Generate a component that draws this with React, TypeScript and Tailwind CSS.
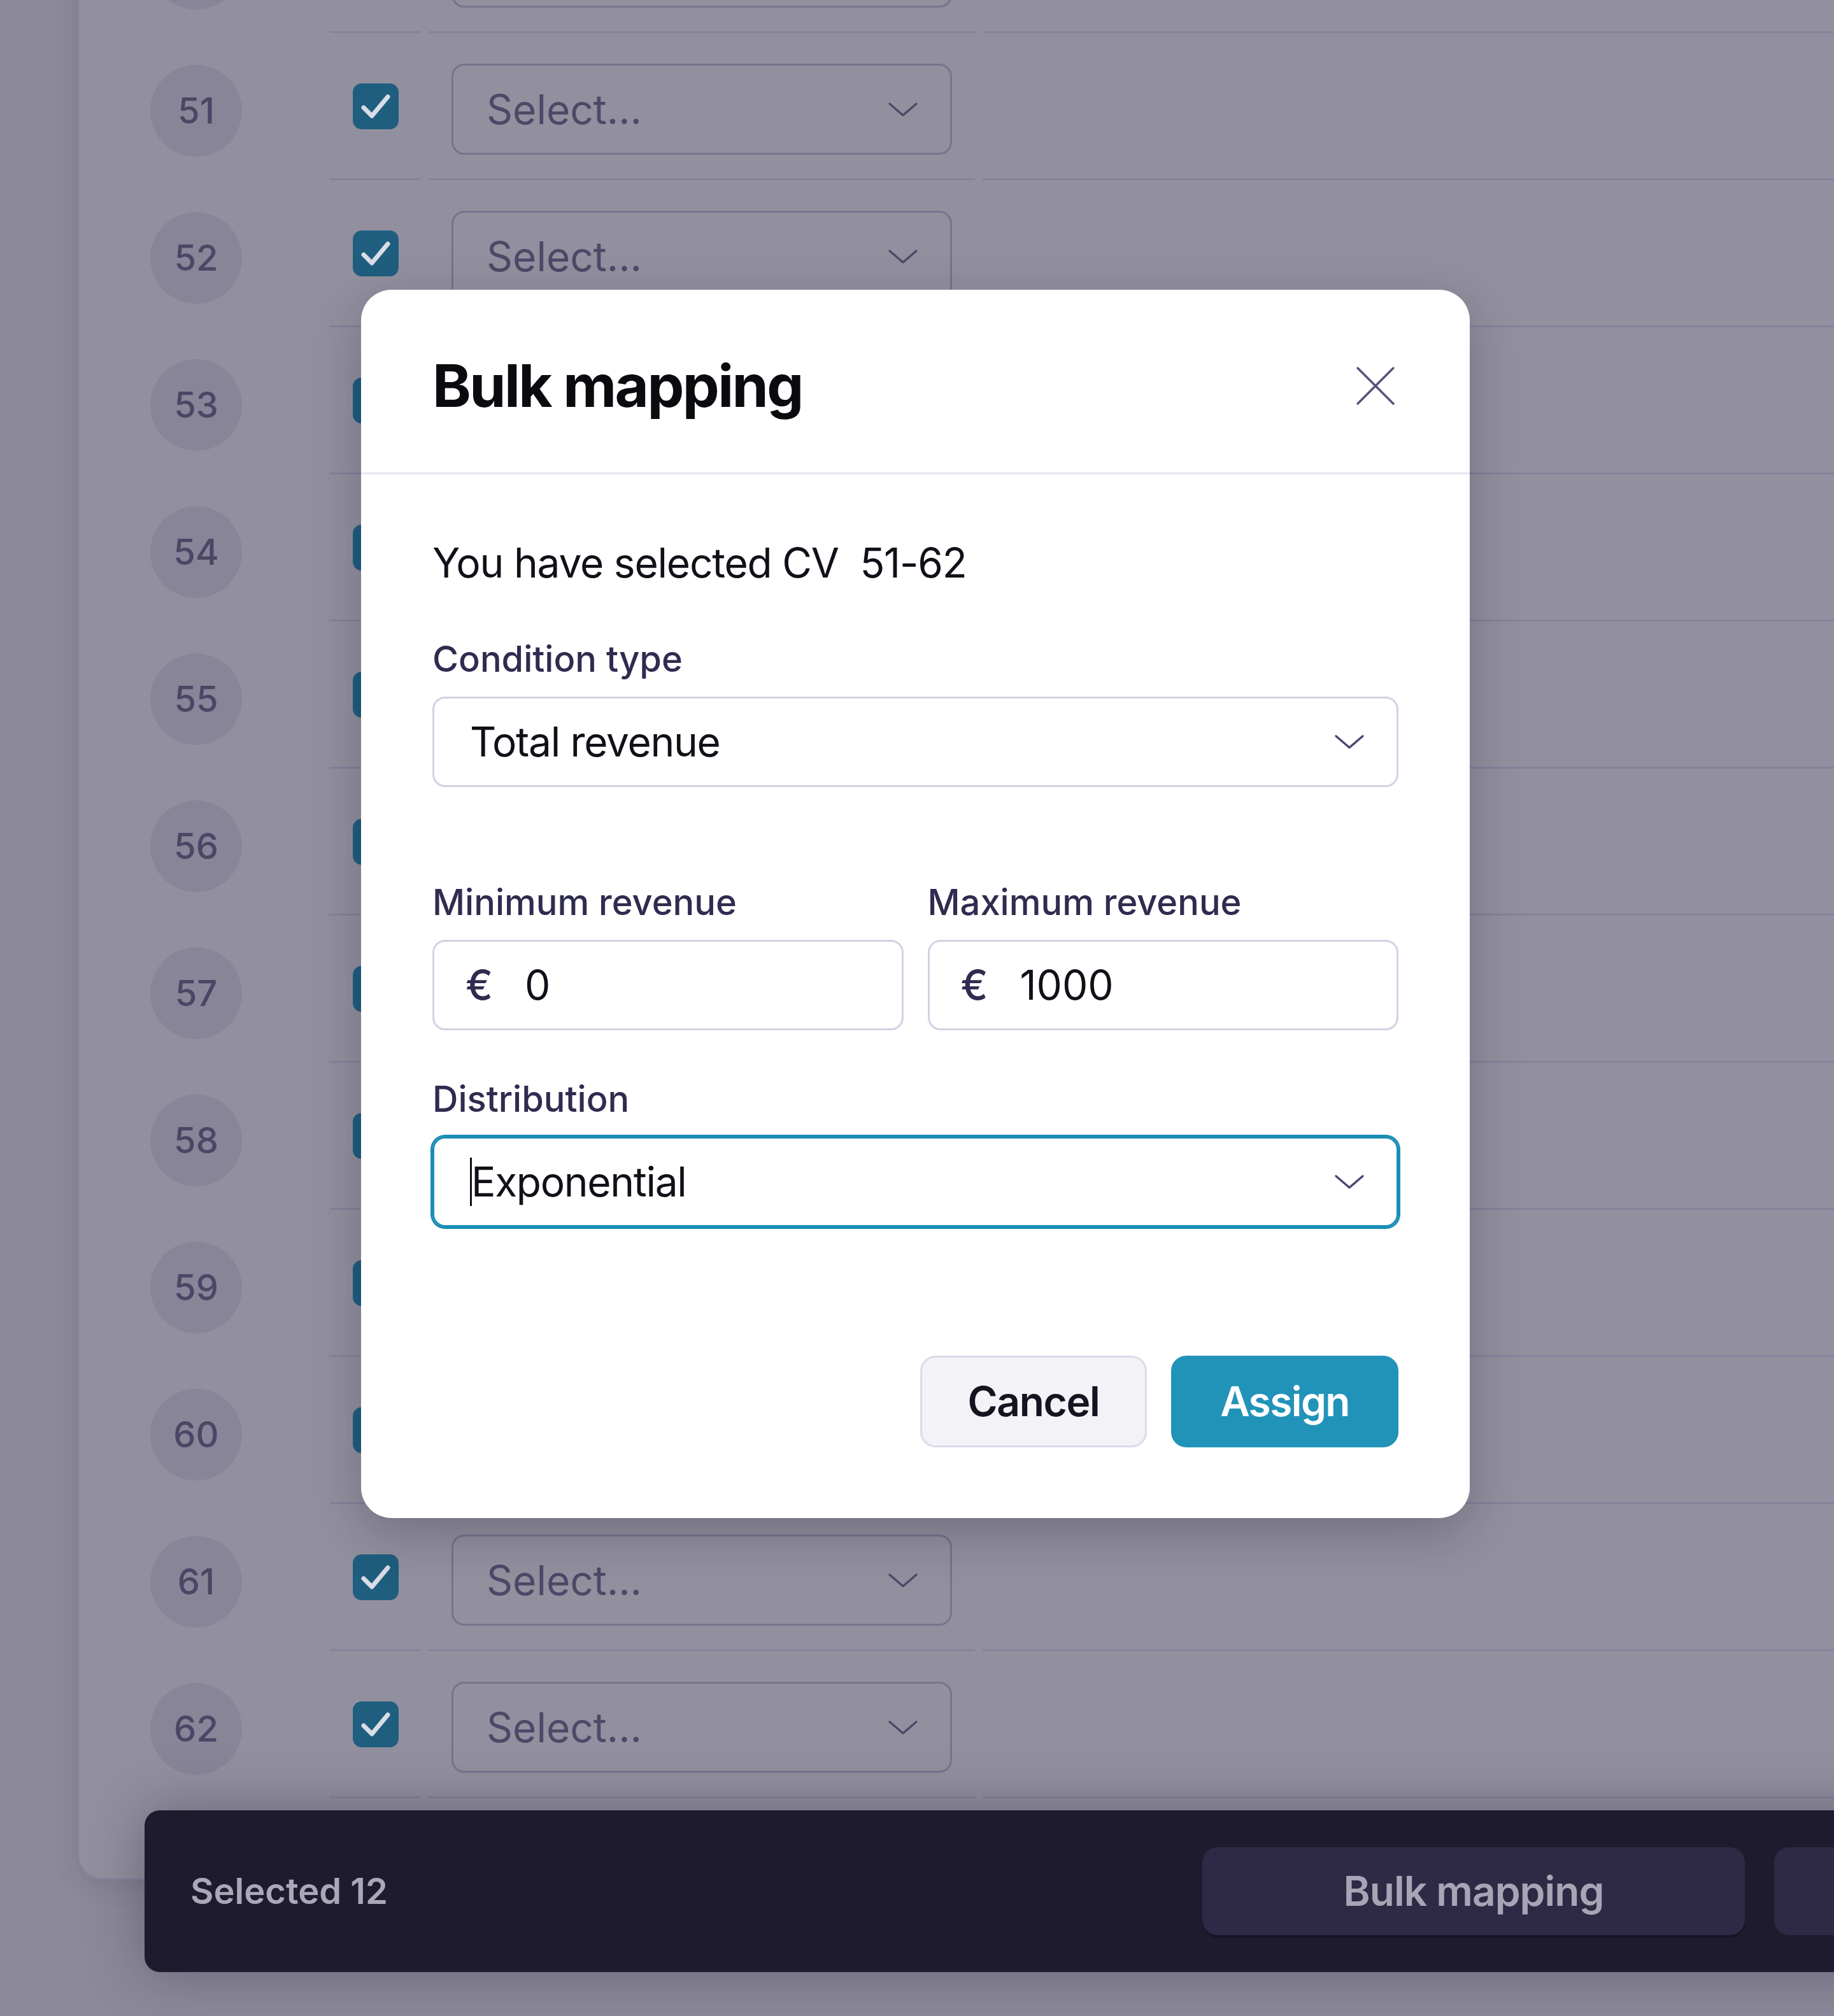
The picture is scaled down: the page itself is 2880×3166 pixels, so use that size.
import { Fragment } from 'react'

const rowIds = [50, 51, 52, 53, 54, 55, 56, 57, 58, 59, 60, 61, 62]

const Chevron = ({ color }: { color: string }) => (
    <svg width="48" height="24" viewBox="0 0 48 24" fill="none" className="shrink-0">
        <polyline points="3,3 24,21 45,3" stroke={color} strokeWidth="3.5" strokeLinecap="round" strokeLinejoin="round" />
    </svg>
)

const TableRow = ({ id }: { id: number }) => {
    return (
        <div className="flex h-[231px]">
            <div className="w-[394px] shrink-0 flex items-center pl-[112px] pt-[12px]">
                <div className="w-[144px] h-[144px] rounded-full bg-[#878597] flex items-center justify-center text-[56px] leading-[80px] font-medium text-[#4a4766]">
                    {id}
                </div>
            </div>
            <div className="w-[143px] shrink-0 border-b-[3px] border-[#85829a] flex items-center justify-center pt-[2px]">
                <div className="w-[72px] h-[72px] rounded-[14px] bg-[#1f5e7f] flex items-center justify-center">
                    <svg width="72" height="72" viewBox="0 0 72 72" fill="none">
                        <polyline points="17,38 30,51 55,21" stroke="#d9dde6" strokeWidth="7" strokeLinecap="round" strokeLinejoin="round" />
                    </svg>
                </div>
            </div>
            <div className="w-[12px] shrink-0" />
            <div className="w-[858px] shrink-0 border-b-[3px] border-[#85829a] flex items-center justify-center pt-[11px]">
                <div className="w-[786px] h-[143px] rounded-[20px] border-[3px] border-[#77748c] flex items-center justify-between pl-[52px] pr-[50px]">
                    <span className="text-[64px] leading-[96px] text-[#4c4968]">Select...</span>
                    <Chevron color="#4c4968" />
                </div>
            </div>
            <div className="w-[12px] shrink-0" />
            <div className="flex-1 border-b-[3px] border-[#85829a]" />
        </div>
    )
}

const Field = ({ label, children }: { label: string, children: React.ReactNode }) => (
    <div className="flex flex-col">
        <span className="text-[56px] leading-[80px] font-medium text-[#2f2c50]">{label}</span>
        <div className="mt-[19px]">{children}</div>
    </div>
)

const App = () => {
    return (
        <div className="relative h-[3166px] w-full overflow-hidden bg-[#8c8a99] font-['Inter',sans-serif]">
            {/* table card behind the overlay */}
            <div className="ml-[121px] w-[3200px] -mt-[182px] pb-[126px] rounded-[40px] border-[3px] border-[#85829a] bg-[#92909e] shadow-[0_10px_40px_rgba(30,27,50,0.12)]">
                {rowIds.map((id) => (
                    <TableRow key={id} id={id} />
                ))}
            </div>

            {/* sticky selection bar */}
            <div className="absolute left-[227px] top-[2843px] h-[254px] w-[2900px] rounded-[24px] bg-[#1e1b2e] flex items-center pl-[72px] shadow-[0_0_90px_rgba(30,27,50,0.35)]">
                <div className="w-[1589px] shrink-0 text-[56px] leading-[80px] font-semibold text-[#a9a7b8]">Selected 12</div>
                <div className="flex gap-[46px]">
                    <div className="w-[852px] h-[138px] rounded-[24px] bg-[#2e2a45] flex items-center justify-center text-[64px] leading-[96px] font-semibold tracking-[-1px] text-[#a7a5b5] shadow-[0_4px_0_rgba(10,8,20,0.35)]">
                        Bulk mapping
                    </div>
                    <div className="w-[852px] h-[138px] rounded-[24px] bg-[#2e2a45]" />
                </div>
            </div>

            {/* modal */}
            <div className="absolute left-[567px] top-[455px] w-[1741px] rounded-[48px] bg-white shadow-[0_24px_80px_rgba(20,16,40,0.25)]">
                <div className="flex items-center justify-between px-[112px] pt-[87px] pb-[72px] border-b-[3px] border-[#e7e5ef]">
                    <span className="text-[92px] leading-[128px] font-bold tracking-[-2.6px] text-[#0a0a0f]">Bulk mapping</span>
                    <button className="w-[72px] h-[72px] flex items-center justify-center">
                        <svg width="72" height="72" viewBox="0 0 72 72" fill="none">
                            <line x1="8" y1="8" x2="64" y2="64" stroke="#55537a" strokeWidth="3.5" strokeLinecap="round" />
                            <line x1="64" y1="8" x2="8" y2="64" stroke="#55537a" strokeWidth="3.5" strokeLinecap="round" />
                        </svg>
                    </button>
                </div>

                <div className="px-[112px] pt-[91px] pb-[111px] flex flex-col">
                    <p className="text-[64px] leading-[96px] tracking-[-1.2px] text-[#111018] whitespace-pre">You have selected CV  51-62</p>

                    <div className="mt-[63px]">
                        <Field label="Condition type">
                            <div className="h-[142px] rounded-[20px] border-[3px] border-[#d4d1e3] flex items-center justify-between pl-[56px] pr-[50px]">
                                <span className="text-[64px] leading-[96px] tracking-[-1.3px] text-[#111018]">Total revenue</span>
                                <Chevron color="#4a4770" />
                            </div>
                        </Field>
                    </div>

                    <div className="mt-[141px] grid grid-cols-2 gap-[38px]">
                        <Field label="Minimum revenue">
                            <div className="h-[142px] rounded-[20px] border-[3px] border-[#d4d1e3] flex items-center pl-[49px]">
                                <span className="w-[93px] text-[64px] leading-[96px] font-medium text-[#2f2c50]">€</span>
                                <span className="text-[64px] leading-[96px] text-[#111018]">0</span>
                            </div>
                        </Field>
                        <Field label="Maximum revenue">
                            <div className="h-[142px] rounded-[20px] border-[3px] border-[#d4d1e3] flex items-center pl-[49px]">
                                <span className="w-[93px] text-[64px] leading-[96px] font-medium text-[#2f2c50]">€</span>
                                <span className="text-[64px] leading-[96px] text-[#111018]">1000</span>
                            </div>
                        </Field>
                    </div>

                    <div className="mt-[68px]">
                        <Field label="Distribution">
                            <div className="h-[142px] rounded-[20px] border-[3px] border-[#1a8db5] ring-[3px] ring-[#1a8db5] flex items-center justify-between pl-[56px] pr-[50px]">
                                <span className="flex items-center text-[64px] leading-[96px] tracking-[-1.3px] text-[#111018]">
                                    <span className="inline-block w-[3px] h-[76px] bg-[#111018] -mr-[1px]" />
                                    Exponential
                                </span>
                                <Chevron color="#4a4770" />
                            </div>
                        </Field>
                    </div>

                    <div className="mt-[202px] flex justify-end gap-[38px]">
                        <Fragment>
                            <button className="w-[356px] h-[144px] rounded-[24px] border-[3px] border-[#dddbea] bg-[#f2f2f7] text-[64px] leading-[96px] font-semibold tracking-[-1.3px] text-[#15131f]">
                                Cancel
                            </button>
                            <button className="w-[357px] h-[144px] rounded-[24px] border-[3px] border-[#2293b8] bg-[#2293b8] text-[64px] leading-[96px] font-semibold tracking-[-1.6px] text-white">
                                Assign
                            </button>
                        </Fragment>
                    </div>
                </div>
            </div>
        </div>
    )
}

export default App
